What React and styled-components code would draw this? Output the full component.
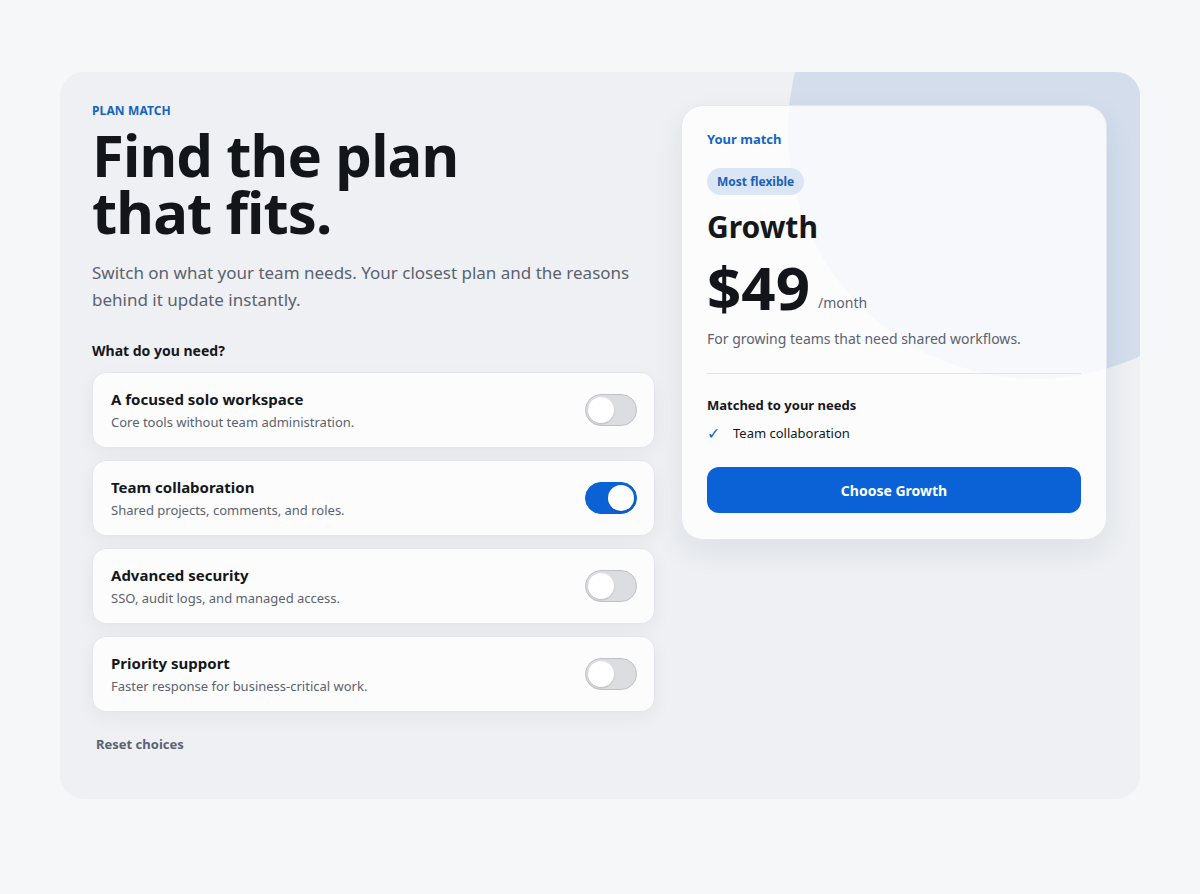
import React, { useState } from 'react';
import styled, { createGlobalStyle } from 'styled-components';

const GlobalStyle = createGlobalStyle`
    * {
        box-sizing: border-box;
    }
    body {
        margin: 0;
        background: #f6f7f9;
        font-family: "Noto Sans", "Open Sans", sans-serif;
        color: #14171c;
    }
`;

const Page = styled.div`
    min-height: 894px;
    padding-top: 72px;
`;

const Shell = styled.section`
    position: relative;
    overflow: hidden;
    width: 1080px;
    margin: 0 auto;
    padding: 32px 33px 46px 32px;
    border-radius: 24px;
    background: #eef0f3;
    display: grid;
    grid-template-columns: 563px 426px;
    column-gap: 26px;
    align-items: start;
`;

const Blob = styled.div`
    position: absolute;
    top: -189px;
    right: -144px;
    width: 496px;
    height: 496px;
    border-radius: 50%;
    background: #d3ddec;
    pointer-events: none;
`;

const LeftColumn = styled.div`
    position: relative;
    display: flex;
    flex-direction: column;
`;

const Eyebrow = styled.div`
    margin-top: 1px;
    font-size: 12px;
    line-height: 12px;
    font-weight: 700;
    color: #1664c0;
    letter-spacing: 0.01em;
`;

const Heading = styled.h1`
    margin: 9px 0 0;
    font-size: 58px;
    line-height: 57px;
    font-weight: 700;
    letter-spacing: -0.015em;
    color: #12151a;
`;

const Lead = styled.p`
    margin: 19px 0 0;
    max-width: 560px;
    font-size: 17px;
    line-height: 27px;
    color: #5b6270;
`;

const SectionLabel = styled.div`
    margin-top: 28px;
    font-size: 14px;
    line-height: 20px;
    font-weight: 700;
    color: #14171c;
`;

const OptionList = styled.div`
    margin-top: 11px;
    display: flex;
    flex-direction: column;
    gap: 12px;
`;

const OptionCard = styled.label`
    display: flex;
    align-items: center;
    justify-content: space-between;
    height: 76px;
    padding: 0 17px 0 18px;
    border: 1px solid #e2e5ea;
    border-radius: 14px;
    background: rgba(255, 255, 255, 0.8);
    box-shadow: 0 6px 18px rgba(30, 40, 60, 0.05);
    cursor: pointer;
`;

const OptionText = styled.div`
    display: flex;
    flex-direction: column;
    gap: 4px;
`;

const OptionTitle = styled.div`
    font-size: 15px;
    line-height: 20px;
    font-weight: 700;
    color: #14171c;
`;

const OptionDesc = styled.div`
    font-size: 13px;
    line-height: 18px;
    color: #5b6270;
`;

const Switch = styled.button`
    position: relative;
    flex: none;
    width: 52px;
    height: 32px;
    padding: 0;
    border-radius: 16px;
    border: 1px solid ${(p) => (p.$on ? '#0b62d4' : '#bfc1c6')};
    background: ${(p) => (p.$on ? '#0b62d4' : '#dcdde0')};
    cursor: pointer;

    &::after {
        content: '';
        position: absolute;
        top: 2px;
        left: ${(p) => (p.$on ? '22px' : '2px')};
        width: 26px;
        height: 26px;
        border-radius: 50%;
        background: #fff;
        box-shadow: 0 1px 2px rgba(0, 0, 0, 0.15);
        transition: left 0.15s ease;
    }
`;

const ResetButton = styled.button`
    align-self: flex-start;
    margin: 23px 0 0 4px;
    padding: 0;
    border: 0;
    background: none;
    font-family: inherit;
    font-size: 13px;
    line-height: 18px;
    font-weight: 700;
    color: #5b6272;
    cursor: pointer;
`;

const MatchCard = styled.aside`
    position: relative;
    margin-top: 1px;
    padding: 24px 25px 26px;
    border: 1px solid #e3e7ee;
    border-radius: 22px;
    background: rgba(255, 255, 255, 0.8);
    box-shadow: 0 12px 30px rgba(30, 45, 70, 0.08);
    display: flex;
    flex-direction: column;
    align-items: flex-start;
`;

const MatchLabel = styled.div`
    font-size: 13px;
    line-height: 18px;
    font-weight: 700;
    color: #1664c0;
`;

const Badge = styled.span`
    margin-top: 20px;
    height: 27px;
    padding: 0 10px;
    display: inline-flex;
    align-items: center;
    border-radius: 14px;
    background: #dae6f6;
    font-size: 12px;
    font-weight: 700;
    color: #1a5fb8;
`;

const PlanName = styled.h2`
    margin: 14px 0 0;
    font-size: 30px;
    line-height: 36px;
    font-weight: 700;
    color: #14171c;
`;

const PriceRow = styled.div`
    margin-top: 11px;
    display: flex;
    align-items: baseline;
    gap: 8px;
`;

const Price = styled.span`
    font-size: 60px;
    line-height: 62px;
    font-weight: 700;
    color: #12151a;
`;

const Period = styled.span`
    position: relative;
    top: -2px;
    font-size: 14px;
    color: #5b6270;
`;

const PlanDesc = styled.p`
    margin: 11px 0 0;
    font-size: 14px;
    line-height: 20px;
    color: #5b6270;
`;

const Divider = styled.hr`
    align-self: stretch;
    margin: 24px 0 0;
    border: 0;
    border-top: 1px solid #dfe2e7;
`;

const ReasonsTitle = styled.div`
    margin-top: 22px;
    font-size: 13px;
    line-height: 18px;
    font-weight: 700;
    color: #14171c;
`;

const ReasonList = styled.ul`
    margin: 9px 0 0;
    padding: 0;
    list-style: none;
    display: flex;
    flex-direction: column;
    gap: 6px;
`;

const Reason = styled.li`
    display: flex;
    align-items: center;
    gap: 12px;
    font-size: 13px;
    line-height: 20px;
    color: #14171c;
`;

const Check = styled.span`
    width: 14px;
    color: #1664c0;
    font-size: 16px;
    line-height: 20px;
`;

const ChooseButton = styled.button`
    align-self: stretch;
    margin-top: 24px;
    height: 46px;
    border: 0;
    border-radius: 12px;
    background: #0b62d6;
    font-family: inherit;
    font-size: 14px;
    font-weight: 700;
    color: #fff;
    cursor: pointer;
`;

const options = [
    { id: 'solo', title: 'A focused solo workspace', desc: 'Core tools without team administration.' },
    { id: 'team', title: 'Team collaboration', desc: 'Shared projects, comments, and roles.' },
    { id: 'security', title: 'Advanced security', desc: 'SSO, audit logs, and managed access.' },
    { id: 'support', title: 'Priority support', desc: 'Faster response for business-critical work.' },
];

const plans = {
    starter: { name: 'Starter', badge: 'Simplest', price: 19, desc: 'For individuals who want a calm, focused workspace.' },
    growth: { name: 'Growth', badge: 'Most flexible', price: 49, desc: 'For growing teams that need shared workflows.' },
    business: { name: 'Business', badge: 'Most secure', price: 99, desc: 'For organisations with strict access needs.' },
};

const defaults = { solo: false, team: true, security: false, support: false };

function pickPlan(choices) {
    if (choices.security || choices.support) return plans.business;
    if (choices.team) return plans.growth;
    return plans.starter;
}

export default function App() {
    const [choices, setChoices] = useState(defaults);
    const plan = pickPlan(choices);
    const matched = options.filter((o) => choices[o.id]);

    const toggle = (id) => setChoices((c) => ({ ...c, [id]: !c[id] }));

    return (
        <Page>
            <GlobalStyle />
            <Shell>
                <Blob />
                <LeftColumn>
                    <Eyebrow>PLAN MATCH</Eyebrow>
                    <Heading>
                        Find the plan
                        <br />
                        that fits.
                    </Heading>
                    <Lead>
                        Switch on what your team needs. Your closest plan and the reasons behind it update instantly.
                    </Lead>
                    <SectionLabel>What do you need?</SectionLabel>
                    <OptionList>
                        {options.map((o) => (
                            <OptionCard key={o.id}>
                                <OptionText>
                                    <OptionTitle>{o.title}</OptionTitle>
                                    <OptionDesc>{o.desc}</OptionDesc>
                                </OptionText>
                                <Switch
                                    type="button"
                                    role="switch"
                                    aria-checked={choices[o.id]}
                                    $on={choices[o.id]}
                                    onClick={() => toggle(o.id)}
                                />
                            </OptionCard>
                        ))}
                    </OptionList>
                    <ResetButton type="button" onClick={() => setChoices(defaults)}>
                        Reset choices
                    </ResetButton>
                </LeftColumn>

                <MatchCard>
                    <MatchLabel>Your match</MatchLabel>
                    <Badge>{plan.badge}</Badge>
                    <PlanName>{plan.name}</PlanName>
                    <PriceRow>
                        <Price>${plan.price}</Price>
                        <Period>/month</Period>
                    </PriceRow>
                    <PlanDesc>{plan.desc}</PlanDesc>
                    <Divider />
                    <ReasonsTitle>Matched to your needs</ReasonsTitle>
                    <ReasonList>
                        {matched.map((o) => (
                            <Reason key={o.id}>
                                <Check>✓</Check>
                                {o.title}
                            </Reason>
                        ))}
                    </ReasonList>
                    <ChooseButton type="button">Choose {plan.name}</ChooseButton>
                </MatchCard>
            </Shell>
        </Page>
    );
}
